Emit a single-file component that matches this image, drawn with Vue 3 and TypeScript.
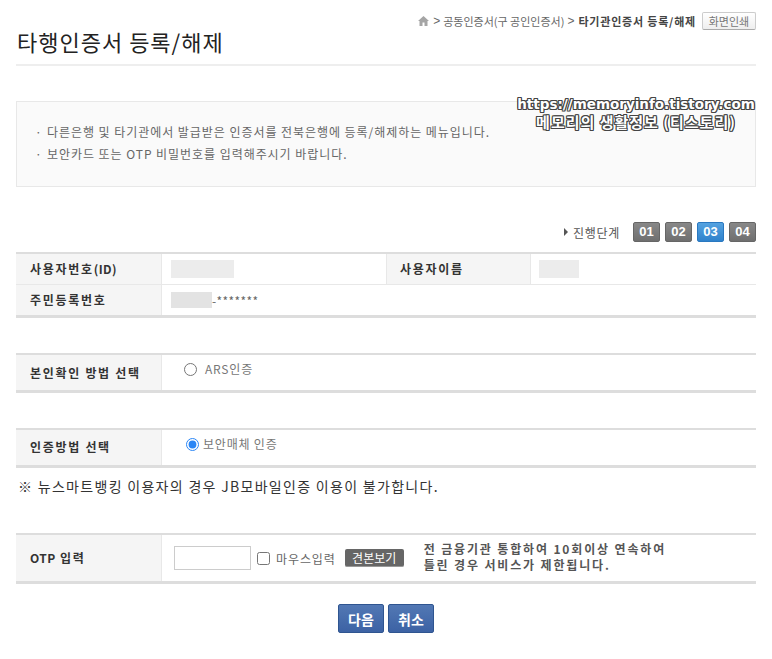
<template>
  <div class="page">
    <div class="crumbs">
      <svg class="home" width="11" height="10" viewBox="0 0 11 10"><path d="M5.5 0 L11 5 H9.5 V10 H6.5 V6.5 H4.5 V10 H1.5 V5 H0 Z" fill="#a5a5a5" /></svg>
      <span class="sep">&gt;</span>
      <span>공동인증서(구 공인인증서)</span>
      <span class="sep">&gt;</span>
      <b>타기관인증서 등록/해제</b>
      <button class="print">화면인쇄</button>
    </div>
    <h1 class="title">타행인증서 등록/해제</h1>

    <div class="info">
      <p v-for="line in infoLines" :key="line"><i>·</i>{{ line }}</p>
    </div>
    <div class="watermark">
      <div class="wm-url">https://memoryinfo.tistory.com</div>
      <div class="wm-name">메모리의 생활정보 (티스토리)</div>
    </div>

    <div class="steps">
      <span class="tri"></span>
      <span class="steps-label">진행단계</span>
      <span v-for="s in steps" :key="s" class="step" :class="{ on: s === '03' }">{{ s }}</span>
    </div>

    <div class="table user">
      <div class="row">
        <div class="th">사용자번호<span class="en">(ID)</span></div>
        <div class="td w224"><span class="blur b63"></span></div>
        <div class="th th2">사용자이름</div>
        <div class="td"><span class="blur b40"></span></div>
      </div>
      <div class="row">
        <div class="th">주민등록번호</div>
        <div class="td"><span class="blur b41"></span><span class="mask">-*******</span></div>
      </div>
    </div>

    <div class="table method">
      <div class="row">
        <div class="th">본인확인 방법 선택</div>
        <div class="td radio-cell">
          <label class="opt"><input type="radio" name="ars" />ARS인증</label>
        </div>
      </div>
    </div>

    <div class="table auth">
      <div class="row">
        <div class="th up">인증방법 선택</div>
        <div class="td radio-cell">
          <label class="opt on"><input type="radio" name="auth" checked />보안매체 인증</label>
        </div>
      </div>
    </div>
    <p class="note">※ 뉴스마트뱅킹 이용자의 경우 JB모바일인증 이용이 불가합니다.</p>

    <div class="table otp">
      <div class="row">
        <div class="th up"><span class="en">OTP</span>&nbsp;입력</div>
        <div class="td otp-cell">
          <input class="otp-input" type="text" />
          <label class="mouse"><input type="checkbox" />마우스입력</label>
          <span class="sample">견본보기</span>
          <p class="warn">전 금융기관 통합하여 10회이상 연속하여<br />틀린 경우 서비스가 제한됩니다.</p>
        </div>
      </div>
    </div>

    <div class="actions">
      <button class="btn">다음</button>
      <button class="btn">취소</button>
    </div>
  </div>
</template>

<script setup lang="ts">
const infoLines: string[] = [
  '다른은행 및 타기관에서 발급받은 인증서를 전북은행에 등록/해제하는 메뉴입니다.',
  '보안카드 또는 OTP 비밀번호를 입력해주시기 바랍니다.',
]
const steps: string[] = ['01', '02', '03', '04']
</script>

<style>
body {
  background: #fff;
}
</style>

<style scoped>
.page {
  position: relative;
  width: 740px;
  height: 659px;
  margin-left: 16px;
  overflow: hidden;
  font-family: "Noto Sans CJK KR", "Liberation Sans", sans-serif;
  font-size: 12px;
  color: #666;
}
.crumbs {
  display: flex;
  align-items: center;
  justify-content: flex-end;
  height: 18px;
  padding-top: 12px;
  gap: 3px;
  font-size: 11px;
  color: #666;
}
.crumbs b {
  color: #444;
  margin-left: 1px;
  letter-spacing: 0.8px;
}
.home {
  margin-right: 1px;
}
.sep {
  font-family: "Liberation Sans", sans-serif;
  font-size: 12px;
}
.print {
  width: 54px;
  height: 18px;
  margin-left: 3px;
  padding: 0;
  border: 1px solid #ccc;
  border-bottom-color: #aaa;
  border-radius: 2px;
  background: linear-gradient(#fff, #eee);
  font: inherit;
  font-size: 11px;
  letter-spacing: 0;
  color: #777;
}
.title {
  height: 34px;
  margin: 0;
  padding-left: 1px;
  border-bottom: 2px solid #eee;
  font-size: 22px;
  font-weight: 400;
  line-height: 23px;
  letter-spacing: 1px;
  color: #222;
}
.info {
  box-sizing: border-box;
  height: 86px;
  margin-top: 35px;
  padding: 19px 0 0 18px;
  border: 1px solid #e8e8e8;
  background: #fafafa;
  color: #666;
}
.info p {
  margin: 0;
  height: 22px;
  line-height: 22px;
  letter-spacing: 0.95px;
}
.info i {
  display: inline-block;
  width: 12px;
  font-style: normal;
}
.watermark {
  position: absolute;
  top: 95px;
  right: 0;
  width: 240px;
  text-align: center;
  font-weight: 700;
  color: #fff;
  white-space: nowrap;
  text-shadow: 1px 0 #444, -1px 0 #444, 0 1px #444, 0 -1px #444, 1px 1px #444, -1px -1px #444, 1px -1px #444, -1px 1px #444;
}
.wm-url {
  font-family: "DejaVu Sans", sans-serif;
  font-size: 13.5px;
  line-height: 18px;
}
.wm-name {
  font-size: 15px;
  line-height: 17px;
  letter-spacing: 1px;
}
.steps {
  display: flex;
  align-items: center;
  justify-content: flex-end;
  height: 20px;
  margin-top: 35px;
  gap: 5px;
}
.tri {
  width: 0;
  height: 0;
  border-left: 4px solid #555;
  border-top: 4px solid transparent;
  border-bottom: 4px solid transparent;
}
.steps-label {
  margin-right: 8px;
  color: #555;
  letter-spacing: 0.7px;
}
.step {
  box-sizing: border-box;
  width: 27px;
  height: 20px;
  border: 1px solid #666;
  border-radius: 2px;
  background: linear-gradient(#888, #6f6f6f);
  color: #fff;
  font-family: "Liberation Sans", sans-serif;
  font-size: 13px;
  font-weight: 700;
  line-height: 18px;
  text-align: center;
}
.step.on {
  border-color: #2a78c0;
  background: linear-gradient(#55a2e0, #2f82cc);
}
.table {
  border-top: 2px solid #ddd;
  border-bottom: 3px solid #ddd;
}
.user {
  margin-top: 10px;
}
.method {
  margin-top: 35px;
}
.auth {
  margin-top: 35px;
}
.otp {
  margin-top: 37px;
}
.row {
  display: flex;
}
.user .row {
  height: 30px;
}
.user .row + .row {
  border-top: 1px solid #e8e8e8;
}
.user .th,
.th.up {
  padding-bottom: 2px;
}
.th {
  box-sizing: border-box;
  display: flex;
  align-items: center;
  width: 146px;
  padding-left: 14px;
  border-right: 1px solid #e8e8e8;
  background: #f5f5f5;
  color: #333;
  font-weight: 700;
  letter-spacing: 1.7px;
  white-space: nowrap;
}
.th .en {
  letter-spacing: 0.4px;
}
.th2 {
  border-left: 1px solid #e8e8e8;
  width: 145px;
  padding-left: 13px;
}
.td {
  display: flex;
  align-items: center;
  padding-left: 9px;
}
.w224 {
  box-sizing: border-box;
  width: 224px;
}
.blur {
  display: block;
  height: 18px;
  background: #ececec;
}
.b63 {
  width: 63px;
}
.b40 {
  width: 40px;
  margin-left: -1px;
}
.b41 {
  width: 41px;
  height: 16px;
  background: #e3e3e3;
}
.mask {
  letter-spacing: 0.4px;
}
.method .row,
.auth .row {
  height: 35px;
}
.radio-cell {
  align-items: flex-start;
  padding-left: 22px;
  padding-top: 5px;
}
.opt {
  display: flex;
  align-items: center;
  gap: 8px;
  line-height: 18px;
  color: #777;
  letter-spacing: 0.8px;
}
.opt input {
  width: 13px;
  height: 13px;
  margin: 0;
  accent-color: #2b86f5;
}
.opt.on {
  margin-left: 2px;
  gap: 4px;
}
.note {
  height: 20px;
  margin: 8px 0 0;
  padding-left: 2px;
  color: #333;
  font-size: 14px;
  line-height: 20px;
  letter-spacing: 1.3px;
  white-space: nowrap;
}
.otp .row {
  height: 46px;
}
.otp-cell {
  padding-left: 12px;
}
.otp-input {
  box-sizing: border-box;
  width: 77px;
  height: 24px;
  border: 1px solid #ccc;
  padding: 0 4px;
}
.mouse {
  display: flex;
  align-items: center;
  gap: 6px;
  margin-left: 6px;
  color: #666;
  letter-spacing: 0.9px;
}
.mouse input {
  width: 13px;
  height: 13px;
  margin: 0;
}
.sample {
  box-sizing: border-box;
  width: 59px;
  height: 18px;
  margin-left: 9px;
  border-radius: 2px;
  background: #666;
  border-bottom: 1px solid #999;
  color: #fff;
  line-height: 17px;
  text-align: center;
}
.warn {
  margin: -2px 0 0 20px;
  color: #555;
  font-weight: 700;
  line-height: 16px;
  letter-spacing: 1.85px;
  white-space: nowrap;
}
.actions {
  display: flex;
  justify-content: center;
  gap: 4px;
  margin-top: 20px;
}
.btn {
  width: 46px;
  height: 29px;
  padding: 0;
  border: 1px solid #2f5590;
  border-radius: 2px;
  background: linear-gradient(#5278b4, #3c62a4);
  color: #fff;
  font: inherit;
  font-size: 14px;
  font-weight: 700;
}
</style>
